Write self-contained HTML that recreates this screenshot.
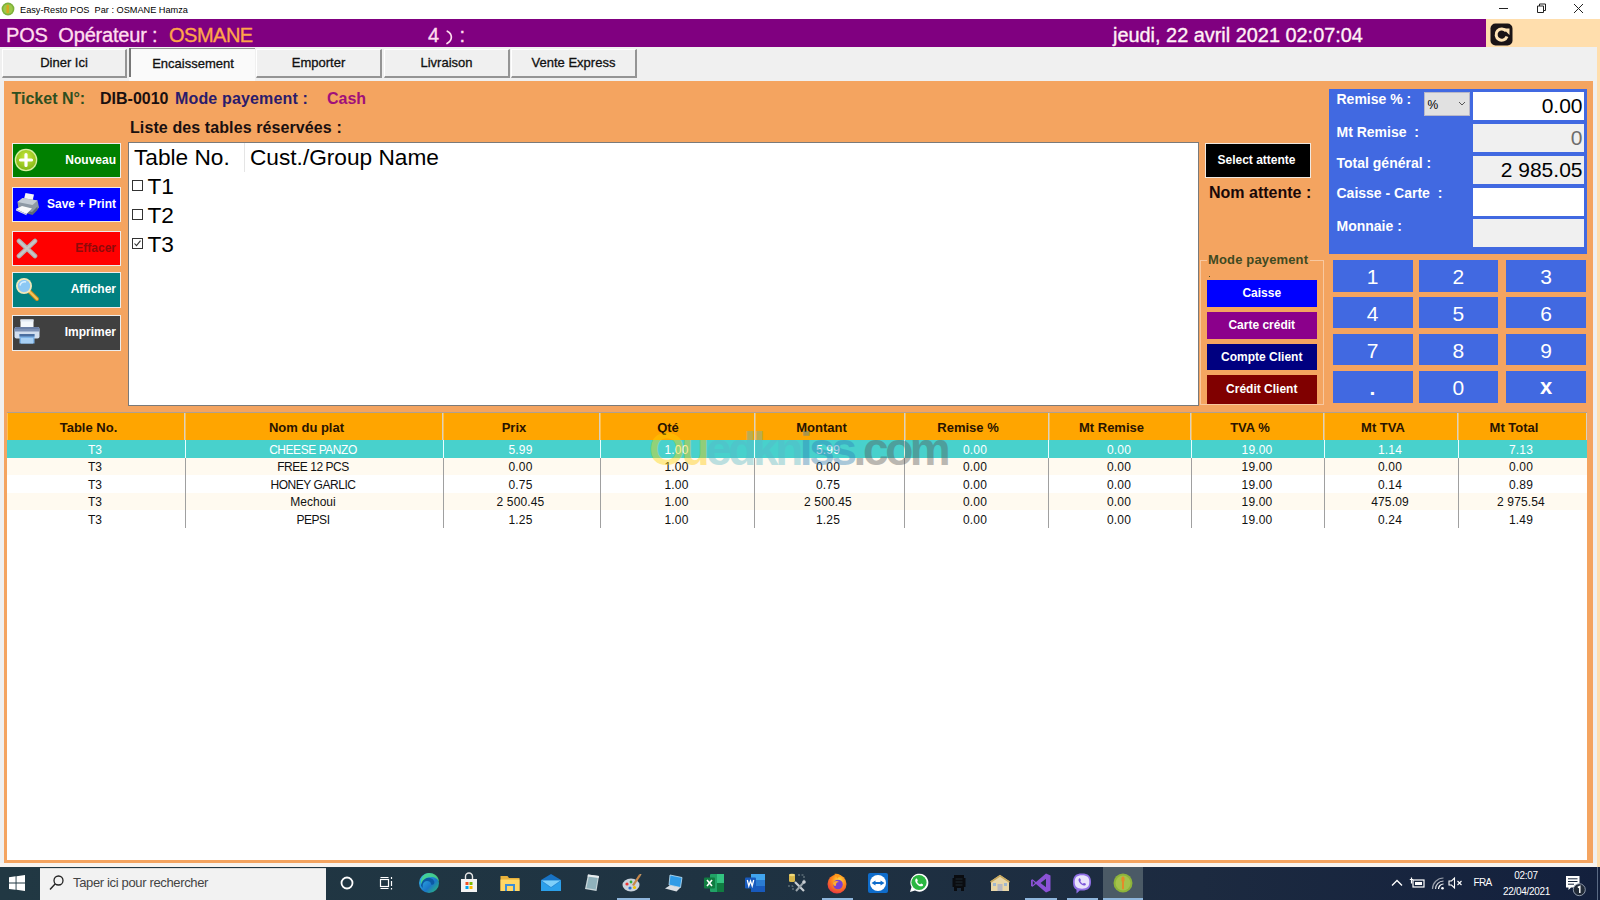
<!DOCTYPE html>
<html><head><meta charset="utf-8">
<style>
*{box-sizing:border-box;margin:0;padding:0}
html,body{width:1600px;height:900px;overflow:hidden;background:#FFDEAD;font-family:"Liberation Sans",sans-serif;}
.a{position:absolute;white-space:nowrap}
#titlebar{left:0;top:0;width:1600px;height:19px;background:#fff;}
#title{left:19.500px;top:3.700px;font-size:9.500px;line-height:12px;color:#000;transform:scaleX(0.967);transform-origin:0 0}
#purple{left:0;top:19px;width:1486px;height:28px;background:#800080}
.ph{font-size:20px;color:#FFDDEE;top:23px;line-height:24px;-webkit-text-stroke:0.350px currentColor}
#tabstrip{left:0;top:47px;width:1597px;height:820px;background:#F0F0F0}
.tab{top:49px;height:29px;background:#F0F0F0;border-top:1px solid #fff;border-left:1px solid #fff;border-right:2px solid #949494;border-bottom:2px solid #949494;font-size:13px;text-align:center;line-height:26.500px;color:#111;-webkit-text-stroke:0.300px #111}
.tabsel{top:48px;height:33px;background:#FAFAFA;border-left:2px solid #FAFAFA;border-top:1px solid #999;font-size:13px;text-align:center;line-height:30px;color:#111;-webkit-text-stroke:0.300px #111}
#panel{left:4px;top:81px;width:1589px;height:782px;background:#F4A460}
.lbl{font-weight:bold;font-size:16px;line-height:18px}
.btn{left:12px;width:108.500px;height:35.500px;border:1.500px solid #EDEDED;color:#fff;font-weight:bold;font-size:12px;text-align:right;padding-right:3.500px;line-height:32px}
#list{left:128px;top:142px;width:1071px;height:264px;background:#fff;border:1px solid #7a7a7a}
.lv{font-size:22.67px;line-height:26px;color:#000}
.cb{width:11px;height:11px;border:1px solid #333;background:#fff}
#bluep{left:1329px;top:88.500px;width:258px;height:165.500px;background:#4169E1}
.bl{color:#fff;font-weight:bold;font-size:14px;line-height:17px;left:1336.500px}
.inp{left:1473px;width:110.500px;height:28px;background:#F0F0F0;text-align:right;font-size:21px;line-height:28px;padding-right:1px;color:#000}
.key{width:80px;height:31.500px;background:#4169E1;color:#fff;font-size:21px;text-align:center;line-height:34px}
.pay{left:1206.500px;width:110.500px;height:26.500px;color:#fff;font-weight:bold;font-size:12px;text-align:center;line-height:26.500px}
#grid{left:7px;top:412px;width:1580px;height:448px;background:#fff;border-top:1px solid #b0a090}
#ghead{left:7px;top:413px;width:1580px;height:27px;background:#FFA500}
.gh{top:413px;height:27px;border-right:1px solid #d8d0c0;border-left:1px solid #ffc04d;font-size:13px;color:#2a1400;text-align:center;line-height:29.500px;font-weight:bold}
.row{left:7px;width:1580px;height:17.500px}
.c{font-size:12px;line-height:17.500px;text-align:center;color:#111}
.vl{top:440px;width:1px;height:87.500px;background:#a0a0a0}
#taskbar{left:0;top:867px;width:1600px;height:33px;background:linear-gradient(90deg,#213843 0%,#1F3342 45%,#1C2A40 75%,#13203D 100%)}
#search{left:40px;top:868px;width:286px;height:32px;background:#F2F2F2;border-top:1px solid #dcdcdc}
</style></head><body>
<div class="a" id="titlebar"></div>
<div class="a" id="title">Easy-Resto POS&nbsp; Par : OSMANE Hamza</div>
<div class="a" id="purple"></div>
<div class="a" id="tabstrip"></div>

<!-- title bar -->
<svg class="a" style="left:1.250px;top:2px" width="14" height="14" viewBox="0 0 14 14"><circle cx="7" cy="7" r="6.400" fill="#7DB13A"/><circle cx="7" cy="7" r="4.800" fill="#9CC84A"/><rect x="5.400" y="2.800" width="2.600" height="8.400" rx="1.200" fill="#D8A820"/></svg>
<svg class="a" style="left:1397px;top:0" width="203" height="19" viewBox="0 0 203 19">
 <g stroke="#222" stroke-width="1" fill="none">
 <path d="M102 8.500h9"/>
 <path d="M140.500 6h6v6.500h-6z" fill="#fff"/><path d="M142.500 6V4h6v6.500h-2"/>
 <path d="M177 4l9 9M186 4l-9 9"/>
 </g></svg>
<!-- purple header -->
<div class="a ph" style="left:6px;letter-spacing:-0.200px">POS&nbsp; Opérateur :</div>
<div class="a ph" style="left:169px;color:#FFA54A;letter-spacing:-0.500px">OSMANE</div>
<div class="a ph" style="left:428px;font-size:20px">4</div><svg class="a" style="left:444px;top:29px" width="12" height="17" viewBox="0 0 12 17"><path d="M3.300 2.200C8.500 5 9 11 3 14.600" stroke="#FFDDEE" stroke-width="1.700" fill="none" stroke-linecap="round"/></svg><div class="a ph" style="left:459.500px;font-size:20px">:</div>
<div class="a ph" style="left:1113px;font-size:19.900px;color:#FFF0F5">jeudi, 22 avril 2021 02:07:04</div>
<svg class="a" style="left:1490px;top:23px" width="23" height="23" viewBox="0 0 23 23"><rect x="0.5" y="0.5" width="22" height="22" rx="5" fill="#1a1416"/><path d="M16.2 8.2A5.6 5.6 0 1 0 17 13.5" stroke="#FFE4B5" stroke-width="3" fill="none"/><path d="M13 5.5l6.5 0 0 6.5z" fill="#FFE4B5"/></svg>
<!-- tabs -->
<div class="a tab" style="left:2px;width:125px">Diner Ici</div>
<div class="a tabsel" style="left:129px;width:126px">Encaissement</div>
<div class="a" style="left:129px;top:48px;width:2px;height:29px;background:#777"></div>
<div class="a tab" style="left:256px;width:126px">Emporter</div>
<div class="a tab" style="left:384px;width:126px">Livraison</div>
<div class="a tab" style="left:511px;width:126px">Vente Express</div>
<div class="a" id="panel"></div>

<!-- panel labels -->
<div class="a lbl" style="left:11.500px;top:89.500px;color:#2F4F1F">Ticket N°:</div>
<div class="a lbl" style="left:100px;top:89.500px;color:#1a1010">DIB-0010</div>
<div class="a lbl" style="left:175px;top:89.500px;color:#2B1B6B;letter-spacing:0.150px">Mode payement :</div>
<div class="a lbl" style="left:327px;top:89.500px;color:#A0107A">Cash</div>
<div class="a lbl" style="left:130px;top:119px;color:#1a1010;letter-spacing:0.100px">Liste des tables réservées :</div>
<!-- left buttons -->
<div class="a btn" style="top:142.500px;background:#008000">Nouveau</div>
<div class="a btn" style="top:186.500px;background:#0000FF">Save + Print</div>
<div class="a btn" style="top:231px;height:35px;background:#FF0000;color:#8E0A0A">Effacer</div>
<div class="a btn" style="top:272px;background:#008080">Afficher</div>
<div class="a btn" style="top:315px;height:35.500px;background:#404040">Imprimer</div>
<svg class="a" style="left:14px;top:148px" width="24" height="24" viewBox="0 0 24 24"><defs><radialGradient id="ng" cx="0.5" cy="0.35" r="0.7"><stop offset="0" stop-color="#C8E83A"/><stop offset="1" stop-color="#7FB414"/></radialGradient></defs><circle cx="12" cy="12" r="11.300" fill="#D8F0A0"/><circle cx="12" cy="12" r="10" fill="url(#ng)"/><path d="M12 6.500v11M6.500 12h11" stroke="#fff" stroke-width="3.200" stroke-linecap="round"/></svg>
<svg class="a" style="left:14px;top:191px" width="27" height="26" viewBox="0 0 27 26"><path d="M11.500 2l8.500 1.500-1.800 8-8.700-1.500z" fill="#F4F6F8"/><path d="M3.500 11l5-4 15 2.500 1.500 7-5.500 5.500-15-4z" fill="#8E99A4"/><path d="M3.500 11l5-4 15 2.500-5 4.500z" fill="#C4CCD4"/><path d="M4.500 17.500l13.500 3.500 5.500-5.500v3.500l-5 5-14-4z" fill="#5E6A76"/><path d="M2 18l6-3 10 2.500-5.500 5.500z" fill="#FAFAFA"/><path d="M2 18l10.500 5v1.200L2 19.500z" fill="#D8DCE0"/></svg>
<svg class="a" style="left:15px;top:237px" width="24" height="23" viewBox="0 0 24 23"><path d="M4 4l16 15M20 4L4 19" stroke="#B4B0B0" stroke-width="4.600" stroke-linecap="round"/><path d="M4 4l16 15M20 4L4 19" stroke="#C8C6C6" stroke-width="2.200" stroke-linecap="round"/></svg>
<svg class="a" style="left:14px;top:276px" width="26" height="26" viewBox="0 0 26 26"><path d="M15 15l8 8" stroke="#C88A1A" stroke-width="4" stroke-linecap="round"/><path d="M15 15l8 8" stroke="#F4C45A" stroke-width="2.200" stroke-linecap="round"/><circle cx="10" cy="10" r="8" fill="#F2E8B8"/><circle cx="10" cy="10" r="6.200" fill="#8CC8F4"/><path d="M6 9.500a4.500 4.500 0 0 1 6-3.500" stroke="#D8F0FF" stroke-width="1.600" fill="none"/></svg>
<svg class="a" style="left:14px;top:319px" width="26" height="25" viewBox="0 0 26 25"><path d="M6.500 0.500h13v9h-13z" fill="#F4F8FC"/><path d="M6.500 0.500h13v2h-13z" fill="#E0E8F2"/><rect x="0.500" y="8" width="25" height="11.500" rx="2" fill="#D2DEEE"/><rect x="0.500" y="8" width="25" height="4" rx="2" fill="#6A7FA6"/><rect x="0.500" y="10" width="25" height="2.500" fill="#7C90B4"/><path d="M5.500 15h15v9.500h-15z" fill="#7FB4E8"/><path d="M5.500 15h15v2.500h-15z" fill="#4A6EA0"/><path d="M7 19h12v5.500H7z" fill="#A8D0F4"/></svg>
<!-- list -->
<div class="a" id="list"></div>
<div class="a lv" style="left:134px;top:144px">Table No.</div>
<div class="a" style="left:244px;top:143px;width:1px;height:29px;background:#e5e5e5"></div>
<div class="a lv" style="left:250px;top:144px">Cust./Group Name</div>
<div class="a cb" style="left:132px;top:180px"></div><div class="a lv" style="left:147.500px;top:173px">T1</div>
<div class="a cb" style="left:132px;top:209px"></div><div class="a lv" style="left:147.500px;top:202px">T2</div>
<div class="a cb" style="left:132px;top:238px"></div><div class="a lv" style="left:147.500px;top:231px">T3</div>
<svg class="a" style="left:132px;top:238px" width="11" height="11" viewBox="0 0 11 11"><path d="M2.5 5.5l2 2.2 4-5" stroke="#333" stroke-width="1.1" fill="none"/></svg>
<!-- select attente -->
<div class="a" style="left:1204.500px;top:142.500px;width:106px;height:35.500px;background:#000;border:1.500px solid #F0E8E0;color:#fff;font-weight:bold;font-size:12px;text-align:center;line-height:32px;padding-right:2px">Select attente</div>
<div class="a lbl" style="left:1209px;top:184px;color:#1a0808">Nom attente :</div>
<!-- mode payement group -->
<div class="a" style="left:1200px;top:260px;width:124px;height:145px;border:1px solid #F8C8A0;border-top:none"></div>
<div class="a" style="left:1200px;top:260px;width:7px;height:1px;background:#F8C8A0"></div>
<div class="a" style="left:1310px;top:260px;width:14px;height:1px;background:#F8C8A0"></div>
<div class="a" style="left:1208px;top:252px;font-size:13px;font-weight:bold;color:#3F4A22;line-height:16px;letter-spacing:0.150px">Mode payement</div>
<div class="a" style="left:1208.500px;top:275.500px;width:1.500px;height:1.500px;background:#3F4A22"></div>
<div class="a pay" style="top:280px;background:#0000FF">Caisse</div>
<div class="a pay" style="top:312px;background:#8B008B">Carte crédit</div>
<div class="a pay" style="top:343.500px;background:#000080">Compte Client</div>
<div class="a pay" style="top:375px;height:28.500px;line-height:28.500px;background:#800000">Crédit Client</div>
<!-- blue panel -->
<div class="a" id="bluep"></div>
<div class="a bl" style="top:91px">Remise % :</div>
<div class="a bl" style="top:123.500px">Mt Remise&nbsp; :</div>
<div class="a bl" style="top:154.500px">Total général :</div>
<div class="a bl" style="top:184.500px">Caisse - Carte&nbsp; :</div>
<div class="a bl" style="top:217.500px">Monnaie :</div>
<div class="a" style="left:1423.500px;top:92px;width:46px;height:23.500px;background:#E1E1E1;border:1px solid #B8B8C8;font-size:12px;line-height:24px;padding-left:3px;color:#000">%</div>
<svg class="a" style="left:1458px;top:100.500px" width="8" height="6" viewBox="0 0 8 6"><path d="M1 1l3 3 3-3" stroke="#555" stroke-width="1" fill="none"/></svg>
<div class="a inp" style="top:92px;background:#fff">0.00</div>
<div class="a inp" style="top:124px;color:#6d6d6d">0</div>
<div class="a inp" style="top:156px;height:27.500px">2 985.05</div>
<div class="a inp" style="top:187.500px;background:#fff"></div>
<div class="a inp" style="top:219px;height:27.500px"></div>
<!-- keypad -->
<div class="a key" style="left:1332.500px;top:260px">1</div><div class="a key" style="left:1418.500px;width:79.500px;top:260px">2</div><div class="a key" style="left:1506px;top:260px">3</div>
<div class="a key" style="left:1332.500px;top:297px;height:31px">4</div><div class="a key" style="left:1418.500px;width:79.500px;top:297px;height:31px">5</div><div class="a key" style="left:1506px;top:297px;height:31px">6</div>
<div class="a key" style="left:1332.500px;top:333.500px;height:31px">7</div><div class="a key" style="left:1418.500px;width:79.500px;top:333.500px;height:31px">8</div><div class="a key" style="left:1506px;top:333.500px;height:31px">9</div>
<div class="a key" style="left:1332.500px;top:370.500px;height:32px;font-weight:bold">.</div><div class="a key" style="left:1418.500px;width:79.500px;top:370.500px;height:32px;line-height:33px">0</div><div class="a key" style="left:1506px;top:370.500px;height:32px;font-weight:bold;font-size:22px;line-height:32px">x</div>
<div class="a" id="grid"></div>
<!-- grid -->
<div class="a" id="ghead"></div>
<div class="a gh" style="left:7px;width:178px"><span class="a" style="left:20.5px;width:120px;top:0">Table No.</span></div>
<div class="a gh" style="left:185px;width:258px"><span class="a" style="left:60.5px;width:120px;top:0">Nom du plat</span></div>
<div class="a gh" style="left:443px;width:157px"><span class="a" style="left:10px;width:120px;top:0">Prix</span></div>
<div class="a gh" style="left:600px;width:154.5px"><span class="a" style="left:7px;width:120px;top:0">Qté</span></div>
<div class="a gh" style="left:754.5px;width:150.0px"><span class="a" style="left:6.0px;width:120px;top:0">Montant</span></div>
<div class="a gh" style="left:904.5px;width:144.0px"><span class="a" style="left:2.5px;width:120px;top:0">Remise %</span></div>
<div class="a gh" style="left:1048.5px;width:142.5px"><span class="a" style="left:2.0px;width:120px;top:0">Mt Remise</span></div>
<div class="a gh" style="left:1191px;width:133px"><span class="a" style="left:-2px;width:120px;top:0">TVA %</span></div>
<div class="a gh" style="left:1324px;width:134px"><span class="a" style="left:-2px;width:120px;top:0">Mt TVA</span></div>
<div class="a gh" style="left:1458px;width:129px"><span class="a" style="left:-5px;width:120px;top:0">Mt Total</span></div>
<div class="a row" style="top:440.0px;background:#48D1CC"></div>
<div class="a c" style="left:35px;width:120px;top:441.7px;color:#fff;letter-spacing:0">T3</div><div class="a c" style="left:253px;width:120px;top:441.7px;color:#fff;letter-spacing:-0.45px">CHEESE PANZO</div><div class="a c" style="left:460.5px;width:120px;top:441.7px;color:#fff;letter-spacing:0.150px">5.99</div><div class="a c" style="left:616.5px;width:120px;top:441.7px;color:#fff;letter-spacing:0.150px">1.00</div><div class="a c" style="left:768px;width:120px;top:441.7px;color:#fff;letter-spacing:0.150px">5.99</div><div class="a c" style="left:915px;width:120px;top:441.7px;color:#fff;letter-spacing:0.150px">0.00</div><div class="a c" style="left:1059px;width:120px;top:441.7px;color:#fff;letter-spacing:0.150px">0.00</div><div class="a c" style="left:1197px;width:120px;top:441.7px;color:#fff;letter-spacing:0.150px">19.00</div><div class="a c" style="left:1330px;width:120px;top:441.7px;color:#fff;letter-spacing:0.150px">1.14</div><div class="a c" style="left:1461px;width:120px;top:441.7px;color:#fff;letter-spacing:0.150px">7.13</div>
<div class="a row" style="top:457.5px;background:#FFFAF0"></div>
<div class="a c" style="left:35px;width:120px;top:459.2px;color:#111;letter-spacing:0">T3</div><div class="a c" style="left:253px;width:120px;top:459.2px;color:#111;letter-spacing:-0.45px">FREE 12 PCS</div><div class="a c" style="left:460.5px;width:120px;top:459.2px;color:#111;letter-spacing:0.150px">0.00</div><div class="a c" style="left:616.5px;width:120px;top:459.2px;color:#111;letter-spacing:0.150px">1.00</div><div class="a c" style="left:768px;width:120px;top:459.2px;color:#111;letter-spacing:0.150px">0.00</div><div class="a c" style="left:915px;width:120px;top:459.2px;color:#111;letter-spacing:0.150px">0.00</div><div class="a c" style="left:1059px;width:120px;top:459.2px;color:#111;letter-spacing:0.150px">0.00</div><div class="a c" style="left:1197px;width:120px;top:459.2px;color:#111;letter-spacing:0.150px">19.00</div><div class="a c" style="left:1330px;width:120px;top:459.2px;color:#111;letter-spacing:0.150px">0.00</div><div class="a c" style="left:1461px;width:120px;top:459.2px;color:#111;letter-spacing:0.150px">0.00</div>
<div class="a row" style="top:475.0px;background:#fff"></div>
<div class="a c" style="left:35px;width:120px;top:476.7px;color:#111;letter-spacing:0">T3</div><div class="a c" style="left:253px;width:120px;top:476.7px;color:#111;letter-spacing:-0.45px">HONEY GARLIC</div><div class="a c" style="left:460.5px;width:120px;top:476.7px;color:#111;letter-spacing:0.150px">0.75</div><div class="a c" style="left:616.5px;width:120px;top:476.7px;color:#111;letter-spacing:0.150px">1.00</div><div class="a c" style="left:768px;width:120px;top:476.7px;color:#111;letter-spacing:0.150px">0.75</div><div class="a c" style="left:915px;width:120px;top:476.7px;color:#111;letter-spacing:0.150px">0.00</div><div class="a c" style="left:1059px;width:120px;top:476.7px;color:#111;letter-spacing:0.150px">0.00</div><div class="a c" style="left:1197px;width:120px;top:476.7px;color:#111;letter-spacing:0.150px">19.00</div><div class="a c" style="left:1330px;width:120px;top:476.7px;color:#111;letter-spacing:0.150px">0.14</div><div class="a c" style="left:1461px;width:120px;top:476.7px;color:#111;letter-spacing:0.150px">0.89</div>
<div class="a row" style="top:492.5px;background:#FFFAF0"></div>
<div class="a c" style="left:35px;width:120px;top:494.2px;color:#111;letter-spacing:0">T3</div><div class="a c" style="left:253px;width:120px;top:494.2px;color:#111;letter-spacing:0">Mechoui</div><div class="a c" style="left:460.5px;width:120px;top:494.2px;color:#111;letter-spacing:0.150px">2 500.45</div><div class="a c" style="left:616.5px;width:120px;top:494.2px;color:#111;letter-spacing:0.150px">1.00</div><div class="a c" style="left:768px;width:120px;top:494.2px;color:#111;letter-spacing:0.150px">2 500.45</div><div class="a c" style="left:915px;width:120px;top:494.2px;color:#111;letter-spacing:0.150px">0.00</div><div class="a c" style="left:1059px;width:120px;top:494.2px;color:#111;letter-spacing:0.150px">0.00</div><div class="a c" style="left:1197px;width:120px;top:494.2px;color:#111;letter-spacing:0.150px">19.00</div><div class="a c" style="left:1330px;width:120px;top:494.2px;color:#111;letter-spacing:0.150px">475.09</div><div class="a c" style="left:1461px;width:120px;top:494.2px;color:#111;letter-spacing:0.150px">2 975.54</div>
<div class="a row" style="top:510.0px;background:#fff"></div>
<div class="a c" style="left:35px;width:120px;top:511.7px;color:#111;letter-spacing:0">T3</div><div class="a c" style="left:253px;width:120px;top:511.7px;color:#111;letter-spacing:-0.45px">PEPSI</div><div class="a c" style="left:460.5px;width:120px;top:511.7px;color:#111;letter-spacing:0.150px">1.25</div><div class="a c" style="left:616.5px;width:120px;top:511.7px;color:#111;letter-spacing:0.150px">1.00</div><div class="a c" style="left:768px;width:120px;top:511.7px;color:#111;letter-spacing:0.150px">1.25</div><div class="a c" style="left:915px;width:120px;top:511.7px;color:#111;letter-spacing:0.150px">0.00</div><div class="a c" style="left:1059px;width:120px;top:511.7px;color:#111;letter-spacing:0.150px">0.00</div><div class="a c" style="left:1197px;width:120px;top:511.7px;color:#111;letter-spacing:0.150px">19.00</div><div class="a c" style="left:1330px;width:120px;top:511.7px;color:#111;letter-spacing:0.150px">0.24</div><div class="a c" style="left:1461px;width:120px;top:511.7px;color:#111;letter-spacing:0.150px">1.49</div>
<div class="a vl" style="left:184.5px"></div><div class="a" style="left:184.5px;top:440px;width:1px;height:17.500px;background:#e8ffff"></div><div class="a vl" style="left:442.5px"></div><div class="a" style="left:442.5px;top:440px;width:1px;height:17.500px;background:#e8ffff"></div><div class="a vl" style="left:599.5px"></div><div class="a" style="left:599.5px;top:440px;width:1px;height:17.500px;background:#e8ffff"></div><div class="a vl" style="left:754.0px"></div><div class="a" style="left:754.0px;top:440px;width:1px;height:17.500px;background:#e8ffff"></div><div class="a vl" style="left:904.0px"></div><div class="a" style="left:904.0px;top:440px;width:1px;height:17.500px;background:#e8ffff"></div><div class="a vl" style="left:1048.0px"></div><div class="a" style="left:1048.0px;top:440px;width:1px;height:17.500px;background:#e8ffff"></div><div class="a vl" style="left:1190.5px"></div><div class="a" style="left:1190.5px;top:440px;width:1px;height:17.500px;background:#e8ffff"></div><div class="a vl" style="left:1323.5px"></div><div class="a" style="left:1323.5px;top:440px;width:1px;height:17.500px;background:#e8ffff"></div><div class="a vl" style="left:1457.5px"></div><div class="a" style="left:1457.5px;top:440px;width:1px;height:17.500px;background:#e8ffff"></div>
<div class="a" style="left:649px;top:424px;font-size:46px;font-weight:bold;letter-spacing:-3.400px;line-height:50px;opacity:0.400"><span style="color:#FFD400">O</span><span style="color:#FFC800">u</span><span style="color:#59B8C8">edkn</span><span style="color:#2E7FB8">iss</span><span style="color:#555">.com</span></div>
<div class="a" style="left:0;top:863px;width:1597px;height:4px;background:#F8F4F0"></div>
<div class="a" id="taskbar"></div>

<!-- taskbar content -->
<div class="a" id="search"></div>
<svg class="a" style="left:5px;top:871px" width="24" height="24" viewBox="0 0 24 24"><g fill="#fff"><path d="M4 6.2l6.6-0.9v6.3H4z"/><path d="M11.5 5.2L20 4v7.6h-8.5z"/><path d="M4 12.5h6.6v6.3L4 17.9z"/><path d="M11.5 12.5H20V20l-8.5-1.2z"/></g></svg>
<svg class="a" style="left:45px;top:871px" width="24" height="24" viewBox="0 0 24 24"><circle cx="13.5" cy="9.5" r="4.5" stroke="#222" stroke-width="1.3" fill="none"/><path d="M10.3 12.8L5 18.5" stroke="#222" stroke-width="1.4"/></svg>
<div class="a" style="left:73px;top:875px;font-size:13px;color:#444;line-height:16px;letter-spacing:-0.35px">Taper ici pour rechercher</div>
<svg class="a" style="left:335px;top:871px" width="24" height="24" viewBox="0 0 24 24"><circle cx="12" cy="12" r="5.5" stroke="#fff" stroke-width="1.8" fill="none"/></svg>
<svg class="a" style="left:374px;top:871px" width="24" height="24" viewBox="0 0 24 24"><g stroke="#fff" stroke-width="1.2" fill="none"><rect x="6.5" y="8.5" width="8" height="7"/><path d="M6.5 6.5h8M6.5 17.5h8M17.5 6v2M17.5 10v5M17.5 17v1.5"/></g></svg>
<svg class="a" style="left:417px;top:871px" width="24" height="24" viewBox="0 0 24 24"><defs><linearGradient id="eg" x1="0" y1="0" x2="1" y2="1"><stop offset="0" stop-color="#35C1F1"/><stop offset="0.6" stop-color="#1B77C8"/><stop offset="1" stop-color="#2FC46A"/></linearGradient></defs><circle cx="12" cy="12" r="10" fill="url(#eg)"/><path d="M4 15c0-6 5-9 9-8 4 1 5 4 4 6-1 1-3 1-3 0 0-2-2-3-4-3-3 0-5 3-4 7z" fill="#0C59A4"/><path d="M12 2c5 0 10 3 10 9-1-3-4-5-8-5-5 0-9 3-10 8C3 7 7 2 12 2z" fill="#4FE07A" opacity="0.75"/></svg>
<svg class="a" style="left:457px;top:871px" width="24" height="24" viewBox="0 0 24 24"><path d="M4 8h16v13H4z" fill="#F3F3F3"/><path d="M8.5 8V5.5a3.5 3.5 0 0 1 7 0V8" stroke="#E8E8E8" stroke-width="1.4" fill="none"/><rect x="8.5" y="11" width="3" height="3" fill="#F25022"/><rect x="12.5" y="11" width="3" height="3" fill="#7FBA00"/><rect x="8.5" y="15" width="3" height="3" fill="#00A4EF"/><rect x="12.5" y="15" width="3" height="3" fill="#FFB900"/></svg>
<svg class="a" style="left:498px;top:871px" width="24" height="24" viewBox="0 0 24 24"><path d="M2.5 5h7l1.5 2h10.5v13h-19z" fill="#E9B13B"/><path d="M2.5 8.5h19V20h-19z" fill="#FFD766"/><path d="M7 13h10v7H7z" fill="#3C8ED8"/><path d="M9 15h6v5H9z" fill="#FFD766"/></svg>
<svg class="a" style="left:539px;top:871px" width="24" height="24" viewBox="0 0 24 24"><path d="M2 9l10-6 10 6v11H2z" fill="#1873C4"/><path d="M2 9.5h20V20H2z" fill="#2CA0EA"/><path d="M2 9.5l10 7 10-7" fill="#7FD0FA"/><path d="M2 9.5l10 7 10-7" stroke="#1873C4" stroke-width="0.6" fill="none"/></svg>
<svg class="a" style="left:580px;top:871px" width="24" height="24" viewBox="0 0 24 24"><path d="M8 3.5l11 1.5-2.5 15L5 18z" fill="#C9D6DA"/><path d="M9 5l8.8 1.2-2.1 12.3L6.5 17z" fill="#8FB2BC"/><path d="M8 3.5l11 1.5-.4 2L7.5 5.5z" fill="#E8EEF0"/></svg>
<svg class="a" style="left:620px;top:871px" width="24" height="24" viewBox="0 0 24 24"><ellipse cx="11" cy="14" rx="8.5" ry="6.5" fill="#C9D3DD"/><circle cx="7" cy="13" r="1.6" fill="#E33"/><circle cx="10" cy="17" r="1.6" fill="#2A6FD0"/><circle cx="14.5" cy="16.5" r="1.6" fill="#F2C200"/><circle cx="11" cy="11" r="1.4" fill="#3A3"/><path d="M12 14L19 3.5l1.8 1.2L14 15z" fill="#C8874A"/><path d="M19 3.5l1.8 1.2.7-1.8z" fill="#E8B070"/></svg>
<svg class="a" style="left:662px;top:871px" width="24" height="24" viewBox="0 0 24 24"><path d="M8 4l12 2.5-1.5 10L7 14z" fill="#2F9BE6"/><path d="M8 4l12 2.5-1.5 10L7 14z" stroke="#BFE4FA" stroke-width="0.8" fill="none"/><path d="M3 17.5l5-3.3 10.5 2.3-4 4z" fill="#D9DEE3"/></svg>
<svg class="a" style="left:702px;top:871px" width="24" height="24" viewBox="0 0 24 24"><rect x="8" y="3" width="14" height="18" rx="1" fill="#21A366"/><rect x="15" y="3" width="7" height="9" fill="#33C481"/><rect x="15" y="12" width="7" height="9" fill="#107C41"/><rect x="2" y="6.5" width="11" height="11" rx="1" fill="#107C41"/><path d="M5 9l5 6M10 9l-5 6" stroke="#fff" stroke-width="1.6"/></svg>
<svg class="a" style="left:743px;top:871px" width="24" height="24" viewBox="0 0 24 24"><rect x="8" y="3" width="14" height="18" rx="1" fill="#2B7CD3"/><rect x="8" y="3" width="14" height="6" fill="#41A5EE"/><rect x="8" y="15" width="14" height="6" fill="#185ABD"/><rect x="2" y="6.5" width="11" height="11" rx="1" fill="#185ABD"/><path d="M4.3 9l1.5 6 1.7-5 1.7 5 1.5-6" stroke="#fff" stroke-width="1.3" fill="none"/></svg>
<svg class="a" style="left:784px;top:871px" width="24" height="24" viewBox="0 0 24 24"><rect x="5" y="3" width="6" height="8" rx="1.5" fill="#D8B74A"/><ellipse cx="8" cy="4" rx="3" ry="1.2" fill="#F0D878"/><path d="M14 4h6v6" stroke="#7A8A90" stroke-width="1" fill="none" stroke-dasharray="2 1.5"/><path d="M4 15h5v5" stroke="#7A8A90" stroke-width="1" fill="none" stroke-dasharray="2 1.5"/><path d="M11 11l9 9" stroke="#C9CED2" stroke-width="2.2"/><path d="M20 11l-8 9" stroke="#9AA4AA" stroke-width="2"/><circle cx="20" cy="11" r="1.8" fill="#C9CED2"/></svg>
<svg class="a" style="left:825px;top:871px" width="24" height="24" viewBox="0 0 24 24"><defs><radialGradient id="ff" cx="0.6" cy="0.3" r="0.8"><stop offset="0" stop-color="#FFE14A"/><stop offset="0.45" stop-color="#FF8A1A"/><stop offset="1" stop-color="#E5254A"/></radialGradient></defs><circle cx="12" cy="13" r="9.5" fill="url(#ff)"/><path d="M9 3c2 1 3 3 3 5 1-2 3-3 5-2-1-2-4-4-8-3z" fill="#FF9A1A"/><circle cx="13" cy="13.5" r="4.8" fill="#7B3FD1"/><path d="M8 12c1-2 4-3 6-1-2 0-3 1-3 3s-3 1-3-2z" fill="#FFB02E"/></svg>
<svg class="a" style="left:866px;top:871px" width="24" height="24" viewBox="0 0 24 24"><rect x="2" y="2" width="20" height="20" rx="2" fill="#0E6CCB"/><circle cx="12" cy="12" r="8" fill="#fff"/><path d="M5.5 12l4-2.6v1.7h5V9.4l4 2.6-4 2.6v-1.7h-5v1.7z" fill="#0E6CCB"/></svg>
<svg class="a" style="left:907px;top:871px" width="24" height="24" viewBox="0 0 24 24"><path d="M3 21l1.5-5A9 9 0 1 1 8 19.5z" fill="#fff"/><circle cx="12" cy="11.5" r="7.6" fill="#2BB741"/><path d="M8.8 7.8c.5-.6 1.2-.4 1.4.2l.6 1.4c.1.4-.6 1-.6 1.3.4 1.2 1.8 2.4 2.8 2.7.4 0 .8-.9 1.2-.8l1.5.7c.5.3.5.9.1 1.4-1 1.100-2.800.600-4.300-.300-1.500-1-2.800-2.600-3.200-4.100-.200-.900-.100-1.800.5-2.500z" fill="#fff"/></svg>
<svg class="a" style="left:947px;top:871px" width="24" height="24" viewBox="0 0 24 24"><path d="M7 4h10v3h1.5v9H17v4h-3v-3h-4v3H7v-4H5.500V7H7z" fill="#0A0C10"/><path d="M8.5 8h7M8.500 11h7M8.500 14h7" stroke="#1F2A33" stroke-width="1"/></svg>
<svg class="a" style="left:988px;top:871px" width="24" height="24" viewBox="0 0 24 24"><path d="M3 10l9-6 9 6v10H3z" fill="#E9D7A8"/><path d="M2 10.500l10-6.800 10 6.800-1 1.200-9-6-9 6z" fill="#C9A95E"/><rect x="9.500" y="13" width="5" height="7" fill="#B8B8C0"/><rect x="5" y="12" width="3" height="3" fill="#9FB7CF"/><rect x="16" y="12" width="3" height="3" fill="#9FB7CF"/></svg>
<svg class="a" style="left:1029px;top:871px" width="24" height="24" viewBox="0 0 24 24"><path d="M17 2.500l4.500 2v15l-4.500 2-10-8.500-3.500 2.800-1.500-.8v-6l1.500-.8 3.500 2.800z" fill="#8B52D6"/><path d="M17 7.800L11.500 12l5.500 4.200z" fill="#1F3141"/><path d="M3.800 9.700v4.600L6 12z" fill="#1F3141"/></svg>
<svg class="a" style="left:1070px;top:871px" width="24" height="24" viewBox="0 0 24 24"><path d="M12 2.500c6 0 9 2.500 9 8.500s-3 8.500-9 8.500c-.8 0-1.500 0-2.200-.1L6.500 22.500v-3.800C3.800 17.500 3 14.800 3 11c0-6 3-8.500 9-8.500z" fill="#8F6FE6"/><path d="M12 4.300c5 0 7.300 2 7.300 6.700s-2.300 6.700-7.300 6.700-7.300-2-7.300-6.700S7 4.300 12 4.300z" fill="#E9E3FB"/><path d="M9 7.500c.5-.5 1.100-.3 1.300.2l.6 1.300c.1.400-.5.900-.5 1.200.4 1.100 1.600 2.200 2.600 2.500.4 0 .7-.8 1.100-.7l1.400.6c.5.300.5.800.1 1.300-.9 1-2.600.600-4-.300S9 11.200 8.600 9.800c-.2-.8-.1-1.700.4-2.300z" fill="#7B55D9"/></svg>
<div class="a" style="left:1103px;top:867px;width:40px;height:33px;background:#4B5A66"></div>
<svg class="a" style="left:1111px;top:871px" width="24" height="24" viewBox="0 0 24 24"><circle cx="12" cy="12" r="9.500" fill="#8DB33A"/><circle cx="12" cy="12" r="7.500" fill="#A4C24A"/><path d="M12 5.500c1.200 0 1.800 1.500 1.600 3.500-.1 1-.6 1.500-.6 2.500v6c0 1.200-2 1.200-2 0v-6c0-1-.5-1.500-.6-2.500-.2-2 .4-3.500 1.600-3.500z" fill="#E58A2A"/></svg>
<div class="a" style="left:617px;top:898px;width:33px;height:2px;background:#8FB6DC"></div><div class="a" style="left:822px;top:898px;width:31px;height:2px;background:#8FB6DC"></div><div class="a" style="left:1025px;top:898px;width:32px;height:2px;background:#8FB6DC"></div><div class="a" style="left:1067px;top:898px;width:31px;height:2px;background:#8FB6DC"></div><div class="a" style="left:1103px;top:898px;width:40px;height:2px;background:#8FB6DC"></div>
<svg class="a" style="left:1385px;top:871px" width="24" height="24" viewBox="0 0 24 24"><path d="M7 14.500l5-5 5 5" stroke="#fff" stroke-width="1.300" fill="none"/></svg>
<svg class="a" style="left:1405px;top:871px" width="24" height="24" viewBox="0 0 24 24"><rect x="8" y="9" width="11" height="7" stroke="#fff" stroke-width="1.200" fill="none"/><rect x="10" y="11" width="7" height="3" fill="#fff"/><path d="M6.500 6.500v6M4.800 8.500h3.400" stroke="#fff" stroke-width="1.200"/></svg>
<svg class="a" style="left:1426px;top:871px" width="24" height="24" viewBox="0 0 24 24"><g stroke="#fff" fill="none"><path d="M6.500 18A11 11 0 0 1 17.500 7" stroke-width="1.200" opacity="0.55"/><path d="M9.500 18A8 8 0 0 1 17.500 10" stroke-width="1.200" opacity="0.8"/><path d="M12.500 18A5 5 0 0 1 17.500 13" stroke-width="1.200"/></g><circle cx="16.500" cy="17.200" r="1.300" fill="#fff"/></svg>
<svg class="a" style="left:1444px;top:871px" width="24" height="24" viewBox="0 0 24 24"><path d="M5 10h2.500l3-3v10l-3-3H5z" stroke="#fff" stroke-width="1.100" fill="none"/><path d="M13.500 10l4 4M17.500 10l-4 4" stroke="#fff" stroke-width="1.100"/></svg>
<div class="a" style="left:1473.500px;top:877px;font-size:10px;color:#fff;line-height:12px;letter-spacing:-0.650px">FRA</div>
<div class="a" style="left:1496px;top:870px;width:60px;text-align:center;font-size:10px;color:#fff;line-height:12px;letter-spacing:-0.300px">02:07</div>
<div class="a" style="left:1496.500px;top:885.500px;width:60px;text-align:center;font-size:10px;color:#fff;line-height:12px;letter-spacing:-0.300px">22/04/2021</div>
<svg class="a" style="left:1560px;top:870px" width="30" height="28" viewBox="0 0 30 28"><path d="M6 6h13.500v11.500H11l-2.500 2.500v-2.500H6z" fill="#fff"/><path d="M8 8.800h9.500M8 11.500h9.500M8 14.200h6" stroke="#17253C" stroke-width="1"/><circle cx="19.300" cy="19.700" r="6" fill="#222B38" stroke="#9AA4B4" stroke-width="0.900"/><path d="M17.800 17.500l2-1v6.500" stroke="#fff" stroke-width="1.500" fill="none"/></svg><div class="a" style="left:1596.500px;top:867px;width:1px;height:33px;background:#5a6a84"></div>
</body></html>
